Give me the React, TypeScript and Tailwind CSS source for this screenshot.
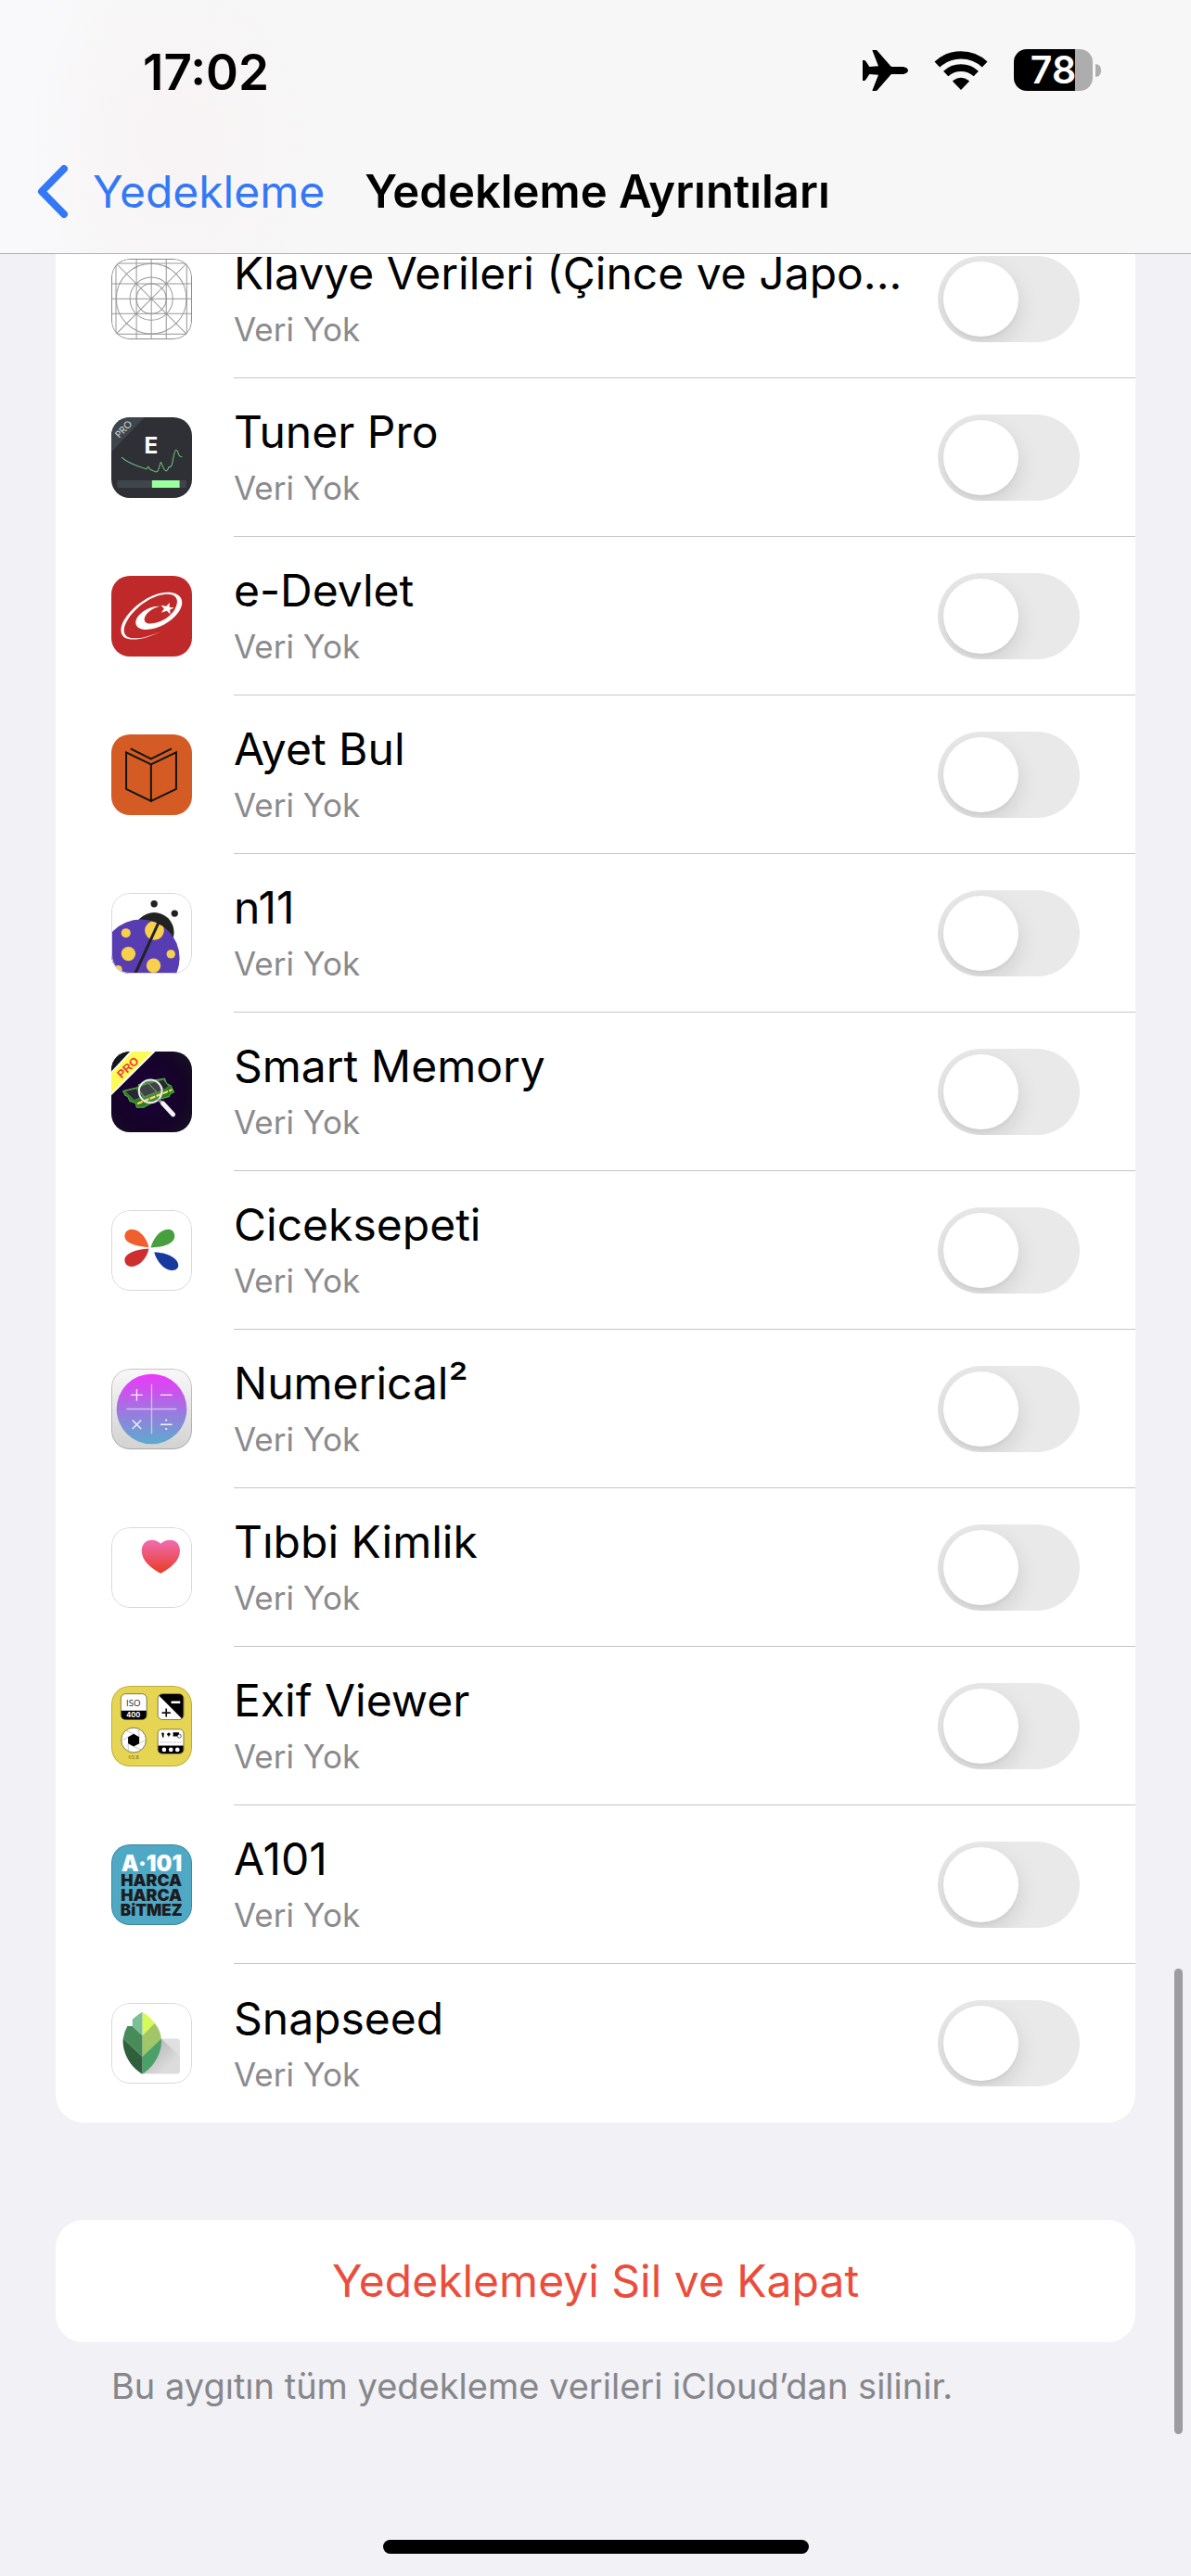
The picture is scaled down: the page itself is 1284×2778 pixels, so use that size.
import { useId, useState, type ReactNode } from "react";

function Glyph({ children }: { children: ReactNode }) {
  return (
    <svg viewBox="0 0 260 260" className="block size-full" aria-hidden="true">
      {children}
    </svg>
  );
}

function KeyboardIcon() {
  return (
    <Glyph>
      <g fill="none" stroke="#979797" strokeWidth="3">
        <path d="M15 15V245M81 0V260M129 0V260M177 0V260M243 15V245M15 15H245M0 81H260M0 129H260M0 177H260M15 243H245M15 15L243 243M243 15L15 243" />
        <circle cx="129" cy="129" r="113" />
        <circle cx="129" cy="129" r="69" />
        <circle cx="129" cy="129" r="48" />
      </g>
    </Glyph>
  );
}

function TunerIcon() {
  return (
    <Glyph>
      <path fill="#2f3036" d="M0 0H260V260H0z" />
      <path fill="#3e454b" d="M0 0H107L0 112z" />
      <text x="40" y="49" fontSize="31" fill="#d5d7d9" textAnchor="middle" transform="rotate(-46 40 39)" fontFamily="Lato, sans-serif">PRO</text>
      <text x="128" y="116" fontSize="73" fontWeight="700" fill="#fff" textAnchor="middle" fontFamily="Inter, sans-serif">E</text>
      <path fill="none" stroke="#74c57c" strokeWidth="3" strokeLinejoin="round" d="M33 129C50 145 80 157 113 167L119 159L125 168L143 176C156 178 155 146 160 145C164 150 168 172 177 173C187 168 182 158 188 160C199 165 200 105 209 105C218 107 213 130 228 127" />
      <rect x="19" y="203" width="223" height="24" rx="3" fill="#3e454b" />
      <path fill="#9cff9f" d="M131 203H220V227H131z" />
    </Glyph>
  );
}

function EDevletIcon() {
  return (
    <Glyph>
      <path fill="#bf2929" d="M0 0H260V260H0z" />
      <path fill="#fff" d="M163 176C125 198 85 208 58 204C25 200 25 165 45 137C75 92 130 55 180 53C225 52 240 82 218 115C195 150 145 175 108 173C75 171 70 145 92 124C110 106 138 96 157 98C130 105 110 122 107 137C103 158 130 158 160 146C190 132 209 110 212 85C213 66 198 57 175 59C130 63 80 100 55 138C32 173 38 198 68 201C95 203 128 194 163 176Z" />
      <path fill="#fff" d="M188 87L187 101L203 103L189 109L190 124L179 113L161 119L170 106L160 95L177 98Z" />
    </Glyph>
  );
}

function BookIcon() {
  return (
    <Glyph>
      <path fill="#d55b25" d="M0 0H260V260H0z" />
      <path fill="none" stroke="#111510" strokeWidth="6" d="M48 58L128 97V215L48 176zM128 97L209 58V176L128 215M62 46L128 79L194 46" />
    </Glyph>
  );
}

function LadybugIcon() {
  const id = useId();
  return (
    <Glyph>
      <path fill="#fff" d="M0 0H260V260H0z" />
      <clipPath id={id}>
        <circle cx="95" cy="210" r="125" />
      </clipPath>
      <circle cx="138" cy="127" r="64" fill="#222" />
      <circle cx="95" cy="210" r="125" fill="#583cb2" />
      <g fill="#f8d04b" clipPath={`url(#${id})`}>
        <circle cx="139" cy="121" r="31" />
        <circle cx="47" cy="129" r="15" />
        <circle cx="55" cy="196" r="23" />
        <circle cx="192" cy="197" r="14" />
        <circle cx="136" cy="234" r="23" />
        <circle cx="22" cy="246" r="13" />
      </g>
      <path stroke="#222" strokeWidth="9" d="M152 96L76 262" />
      <circle cx="138" cy="35" r="11" fill="#222" />
      <circle cx="204" cy="66" r="11" fill="#222" />
    </Glyph>
  );
}

function SmartMemoryIcon() {
  const id = useId();
  return (
    <Glyph>
      <radialGradient id={id} cx="0.45" cy="0.5" r="0.75">
        <stop offset="0" stopColor="#1d003a" />
        <stop offset="0.6" stopColor="#150328" />
        <stop offset="1" stopColor="#161420" />
      </radialGradient>
      <path fill={`url(#${id})`} d="M0 0H260V260H0z" />
      <path fill="#15161c" d="M0 0H66L0 68z" />
      <path fill="#fff" d="M60 0H142L0 141V64z" />
      <path fill="#fcfb57" d="M68 0H134L0 134V70z" />
      <text x="54" y="64" fontSize="37" fontWeight="700" fill="#ee3a3f" textAnchor="middle" transform="rotate(-43 54 52)" fontFamily="Liberation Sans, sans-serif">PRO</text>
      <path fill="#2f7a2a" stroke="#55b83a" strokeWidth="3" d="M38 127L87 115L88 106L106 104L107 97L172 87L178 103L192 110L202 131L190 136L186 145L147 156L128 167L104 180L82 180L78 166L60 160L53 145L44 141z" />
      <path fill="#26292d" stroke="#6f8a6a" strokeWidth="2" d="M44 128L80 119L103 145L74 157zM84 116L119 103L145 130L107 146zM121 103L143 97L169 122L149 132zM146 97L167 90L185 112L171 123z" />
      <path stroke="#ffe24a" strokeWidth="6" strokeDasharray="18 4" d="M84 168L196 123" />
      <circle cx="126" cy="128" r="37" fill="#fff" fillOpacity=".12" stroke="#f0eef2" strokeWidth="6" />
      <path stroke="#93939c" strokeWidth="9" d="M151 154L163 166" />
      <path stroke="#f4f4f5" strokeWidth="15" strokeLinecap="round" d="M166 167L199 203" />
    </Glyph>
  );
}

function CiceksepetiIcon() {
  return (
    <Glyph>
      <path fill="#fff" d="M0 0H260V260H0z" />
      <path fill="#ef602e" d="M121 120C85 118 43 108 43 84C43 68 55 62 66 62C95 62 115 95 121 120Z" />
      <path fill="#cf2e2e" d="M121 124C115 155 90 182 65 182C50 182 43 172 43 160C43 140 80 126 121 124Z" />
      <path fill="#489f40" d="M127 121C135 90 158 62 182 62C196 62 204 70 204 84C204 108 170 120 127 121Z" />
      <path fill="#163a9e" d="M138 136C180 136 216 155 216 178C216 190 205 195 195 194C170 193 148 168 138 136Z" />
    </Glyph>
  );
}

function NumericalIcon() {
  const id = useId();
  return (
    <Glyph>
      <linearGradient id={`${id}a`} x2="0" y2="1">
        <stop stopColor="#f8f8f8" />
        <stop offset="1" stopColor="#d2d2d2" />
      </linearGradient>
      <linearGradient id={`${id}b`} x2="0" y2="1">
        <stop stopColor="#e93bfb" />
        <stop offset="0.25" stopColor="#cb52ec" />
        <stop offset="0.55" stopColor="#9a7bdf" />
        <stop offset="1" stopColor="#5cabcd" />
      </linearGradient>
      <path fill={`url(#${id}a)`} d="M0 0H260V260H0z" />
      <circle cx="130" cy="130" r="113" fill={`url(#${id}b)`} />
      <path stroke="#fff" strokeOpacity=".55" strokeWidth="4" d="M130 50V210M49 130H210" />
      <path stroke="#fff" strokeOpacity=".9" strokeWidth="4" d="M82 66V104M63 85H101M158 85H196M68 166L96 194M96 166L68 194M158 180H196" />
      <circle cx="177" cy="166" r="3" fill="#fff" />
      <circle cx="177" cy="194" r="3" fill="#fff" />
    </Glyph>
  );
}

function HealthIcon() {
  const id = useId();
  return (
    <Glyph>
      <linearGradient id={id} x2="0" y2="1">
        <stop stopColor="#ef6db4" />
        <stop offset="1" stopColor="#ea3b22" />
      </linearGradient>
      <path fill="#fff" d="M0 0H260V260H0z" />
      <path fill={`url(#${id})`} d="M159 149C130 132 98 110 98 76C98 54 112 41 130 41C143 41 153 46 159 53C166 46 176 41 189 41C208 41 221 54 221 76C221 110 188 132 159 149Z" />
    </Glyph>
  );
}

function ExifIcon() {
  return (
    <Glyph>
      <path fill="#e6d553" d="M0 0H260V260H0z" />
      <g stroke="#47431f" strokeWidth="2">
        <rect x="31" y="26" width="83" height="83" rx="15" fill="#fff" />
        <rect x="150" y="26" width="83" height="83" rx="15" fill="#fff" />
        <circle cx="72" cy="175" r="40" fill="#fff" />
        <rect x="150" y="140" width="83" height="79" rx="13" fill="#fff" />
      </g>
      <path d="M32 80H113V94Q113 108 99 108H46Q32 108 32 94Z" />
      <path d="M154 32Q158 27 165 27H218Q232 27 232 41V94Q232 101 227 105Z" />
      <path d="M151 193H232V205Q232 218 219 218H164Q151 218 151 205Z" />
      <text x="71" y="66" fontSize="29" textAnchor="middle" fill="#222" fontFamily="Open Sans, sans-serif">ISO</text>
      <text x="71" y="103" fontSize="22" fontWeight="700" textAnchor="middle" fill="#fff" fontFamily="Inter, sans-serif">400</text>
      <path stroke="#fff" strokeWidth="7" d="M193 53H222" />
      <path stroke="#111" strokeWidth="5" d="M177 73V100M163 87H191" />
      <path d="M72 155L90 165V186L72 196L54 186V165Z" />
      <path stroke="#aaa" strokeWidth="2" d="M72 155L48 145M90 165L88 139M90 186L111 174M72 196L97 206M54 186L55 211M54 165L33 177" />
      <text x="72" y="236" fontSize="15" textAnchor="middle" fill="#746c27" fontFamily="Inter, sans-serif">f/2.8</text>
      <circle cx="170" cy="206" r="7" fill="#fff" />
      <circle cx="192" cy="206" r="7" fill="#fff" />
      <circle cx="213" cy="206" r="7" fill="#fff" />
      <circle cx="166" cy="155" r="4" />
      <path d="M163 158H169V164L166 168Z" />
      <circle cx="185" cy="156" r="5" />
      <path d="M183 158H187L185 167Z" />
      <path d="M199 150H218V163H199z" />
      <circle cx="219" cy="162" r="6" fill="#fff" stroke="#111" strokeWidth="2" />
      <path stroke="#aaa" strokeWidth="2" strokeDasharray="6 2" d="M156 182H226" />
    </Glyph>
  );
}

function A101Icon() {
  return (
    <Glyph>
      <path fill="#4fa8c4" d="M0 0H260V260H0z" />
      <g textAnchor="middle" fontFamily="Inter, sans-serif" fontWeight="900">
        <text x="130" y="86" fontSize="71" fill="#fff">A·101</text>
        <g fontSize="53" fill="#1c1c1e">
          <text x="129" y="134">HARCA</text>
          <text x="129" y="182">HARCA</text>
          <text x="129" y="229" fontSize="51">BiTMEZ</text>
        </g>
      </g>
    </Glyph>
  );
}

function SnapseedIcon() {
  const id = useId();
  return (
    <Glyph>
      <linearGradient id={id} x2="1" y2="1">
        <stop offset=".3" stopColor="#bdbdbd" />
        <stop offset=".75" stopColor="#dcdcdc" />
      </linearGradient>
      <path fill="#fff" d="M0 0H260V260H0z" />
      <rect x="100" y="115" width="121" height="113" rx="10" fill="#e0e0e0" />
      <path fill={`url(#${id})`} d="M161 115L221 172V218Q221 228 211 228H100Z" />
      <path fill="#d6fb55" d="M100 29Q122 42 140 65L100 105Z" />
      <path fill="#a1c567" d="M140 65Q158 88 161 115L100 173V105Z" />
      <path fill="#4ba068" d="M161 115C165 160 136 208 100 229V173Z" />
      <path fill="#7cbe98" d="M100 29Q82 39 68 53V74L100 105Z" />
      <path fill="#468b58" d="M52 75H68L100 105V173L38 115Q41 93 52 75Z" />
      <path fill="#305f3c" d="M38 115C34 160 62 208 100 229V173Z" />
    </Glyph>
  );
}

type App = { name: string; icon: ReactNode; frame: string };

const plain = "";
const light = "border border-[#d8d8d8]";
const dim = "border border-black/20";

const apps: App[] = [
  { name: "Klavye Verileri (Çince ve Japo...", icon: <KeyboardIcon />, frame: "border border-[#8c8c8c]" },
  { name: "Tuner Pro", icon: <TunerIcon />, frame: plain },
  { name: "e-Devlet", icon: <EDevletIcon />, frame: plain },
  { name: "Ayet Bul", icon: <BookIcon />, frame: plain },
  { name: "n11", icon: <LadybugIcon />, frame: light },
  { name: "Smart Memory", icon: <SmartMemoryIcon />, frame: plain },
  { name: "Ciceksepeti", icon: <CiceksepetiIcon />, frame: light },
  { name: "Numerical²", icon: <NumericalIcon />, frame: dim },
  { name: "Tıbbi Kimlik", icon: <HealthIcon />, frame: light },
  { name: "Exif Viewer", icon: <ExifIcon />, frame: dim },
  { name: "A101", icon: <A101Icon />, frame: dim },
  { name: "Snapseed", icon: <SnapseedIcon />, frame: light },
];

function AppRow({ app }: { app: App }) {
  const id = useId();
  const [on, setOn] = useState(false);
  return (
    <li className="group flex h-[171px] items-center pl-[60px]">
      <div className="relative size-[87px] shrink-0 overflow-hidden rounded-[20px]">
        {app.icon}
        <div className={`absolute inset-0 rounded-[20px] ${app.frame}`} />
      </div>
      <div className="ml-[45px] flex h-full min-w-0 flex-1 items-center justify-between border-b border-[#c6c6c8] pr-[60px] group-last:border-b-0">
        <label htmlFor={id} className="flex min-w-0 flex-col gap-0.5 whitespace-nowrap">
          <span className="text-[48px] leading-[64px] text-black">{app.name}</span>
          <span className="text-[35px] leading-[52px] text-[#8a8a8e]">Veri Yok</span>
        </label>
        <input
          id={id}
          type="checkbox"
          role="switch"
          checked={on}
          onChange={(e) => setOn(e.target.checked)}
          className="h-[93px] w-[153px] shrink-0 cursor-pointer appearance-none overflow-hidden rounded-full bg-[#e9e9ea] p-[6px] before:block before:size-[81px] before:rounded-full before:bg-white before:shadow-[0_9px_24px_rgba(0,0,0,0.12),0_3px_3px_rgba(0,0,0,0.03)] checked:bg-[#34c759] checked:before:ml-[60px]"
        />
      </div>
    </li>
  );
}

function StatusBar() {
  return (
    <div className="flex h-[138px] items-start justify-between pt-[53px] pr-[97px] pl-[154px]">
      <time className="text-[53px] leading-[50px] font-semibold">17:02</time>
      <div className="flex h-[45px] items-center">
        <svg viewBox="0 0 147 132" className="mr-7 h-11 w-[49px]" aria-label="Uçak modu">
          <path d="M147 66C147 59 138 54 126 54H96C92 54 90 52 88 49L50 5C48 2 46 0 43 0H33C31 0 31 1 32 3L51 52L22 54L10 36C8 34 7 33 4 33H0V99H4C7 99 8 98 10 96L22 78L51 80L32 129C31 131 31 132 33 132H43C46 132 48 130 50 127L88 83C90 80 92 78 96 78H126C138 78 147 73 147 66Z" />
        </svg>
        <svg viewBox="0 0 172 126" className="mr-7 h-[42px] w-[58px]" aria-label="Wi-Fi">
          <g fill="none" stroke="#000">
            <path strokeWidth="25" d="M9 43.4A113 113 0 0 1 163 43.4" />
            <path strokeWidth="23" d="M37 73.4A72 72 0 0 1 135 73.4" />
          </g>
          <path d="M86 126L60 99Q58 97 61 95Q86 77 111 95Q114 97 112 99Z" />
        </svg>
        <div className="flex h-[45px] w-[85px] items-center justify-center rounded-[14px] bg-[linear-gradient(90deg,#000_78%,#adadad_78%)] text-[41px] leading-[45px] font-semibold text-white">
          78
        </div>
        <div className="ml-[3px] h-[14px] w-[6px] rounded-r-full bg-[#adadad]" />
      </div>
    </div>
  );
}

export default function App() {
  return (
    <div className="min-h-screen bg-[#f1f1f6] font-['Inter',sans-serif] text-black">
      <header className="fixed inset-x-0 top-0 z-10 border-b border-[#b0b0b2] bg-[#f7f7f7] bg-[radial-gradient(ellipse_170px_200px_at_190px_150px,#f8f3f4,transparent),linear-gradient(90deg,#f9f9fb,#f7f7f7_20%,#f7f7f7)]">
        <StatusBar />
        <nav className="flex h-[135px] items-center pt-[2px] pl-10">
          <a href="#yedekleme" className="flex items-center text-[48px] leading-[60px] text-[#3478f6]">
            <svg viewBox="0 0 33 57" className="mr-[27px] h-[57px] w-[33px]" fill="none" stroke="currentColor" strokeWidth="8" strokeLinecap="round" strokeLinejoin="round" aria-hidden="true">
              <path d="M29 4L5 28.500L29 53" />
            </svg>
            Yedekleme
          </a>
          <h1 className="ml-[43px] text-[49px] leading-[60px] font-semibold">Yedekleme Ayrıntıları</h1>
        </nav>
      </header>

      <main className="px-[60px] pt-[237px] pb-[150px]">
        <ul className="overflow-hidden rounded-b-[30px] bg-white">
          {apps.map((app) => (
            <AppRow key={app.name} app={app} />
          ))}
        </ul>
        <button type="button" className="mt-[105px] block h-[132px] w-full rounded-[30px] bg-white text-center text-[48px] text-[#eb4d3d]">
          Yedeklemeyi Sil ve Kapat
        </button>
        <p className="mt-[21px] px-[60px] text-[38px] leading-[52px] text-[#86868b]">
          Bu aygıtın tüm yedekleme verileri iCloud’dan silinir.
        </p>
      </main>

      <div className="fixed right-[9px] bottom-[153px] h-[502px] w-[9px] rounded-full bg-[#9d9d9f]" />
      <div className="fixed inset-x-0 bottom-6 mx-auto h-[15px] w-[459px] rounded-full bg-black" />
    </div>
  );
}
